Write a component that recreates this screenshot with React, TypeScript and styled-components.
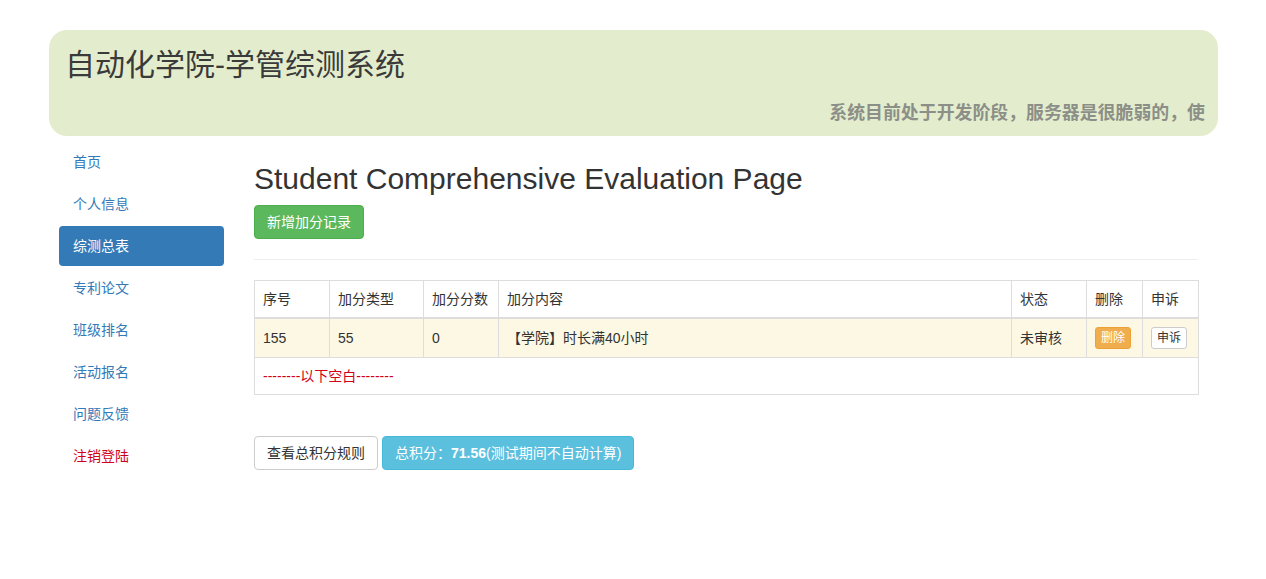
import React from "react";
import styled, { createGlobalStyle } from "styled-components";

const Global = createGlobalStyle`
  html, body { margin: 0; padding: 0; background: #fff; }
  body {
    font-family: "Liberation Sans", Arial, "Noto Sans CJK SC", sans-serif;
    font-size: 14px;
    line-height: 1.42857;
    color: #333;
  }
  * { box-sizing: border-box; }
`;

const Page = styled.div`
  width: 1170px;
  margin: 30px auto 0;
`;

const Jumbotron = styled.header`
  margin-left: 1px;
  height: 106px;
  background: #e3edcd;
  border-radius: 18px;
  padding: 17px 13px 12px 16px;
  display: flex;
  flex-direction: column;
`;

const SiteTitle = styled.h1`
  margin: 0;
  font-size: 30px;
  font-weight: 400;
  line-height: 36px;
  color: #3a3a3a;
`;

const Notice = styled.div`
  margin-top: auto;
  overflow: hidden;
  white-space: nowrap;
  text-align: right;
  font-family: "Noto Sans CJK SC", sans-serif;
  font-size: 17.9px;
  font-weight: 700;
  line-height: 26px;
  color: #8c8f88;
`;

const Body = styled.div`
  display: flex;
  align-items: flex-start;
  margin-top: 4px;
`;

const Sidebar = styled.nav`
  width: 165px;
  margin-left: 11px;
  display: flex;
  flex-direction: column;
`;

const NavItem = styled.a<{ $active?: boolean; $danger?: boolean }>`
  display: block;
  height: 40px;
  margin-top: 2px;
  padding: 10px 14px;
  border-radius: 4px;
  font-size: 14px;
  line-height: 20px;
  text-decoration: none;
  cursor: pointer;
  background: ${(p) => (p.$active ? "#337ab7" : "transparent")};
  color: ${(p) => (p.$active ? "#fff" : p.$danger ? "#d0021b" : "#337ab7")};
`;

const Main = styled.main`
  width: 944px;
  margin-left: 30px;
`;

const PageHeading = styled.h2`
  margin: 22px 0 10px;
  font-size: 30px;
  font-weight: 400;
  line-height: 33px;
  color: #333;
`;

const Btn = styled.button<{ $variant: "success" | "default" | "info" | "warning"; $size?: "xs" }>`
  display: inline-block;
  font-family: inherit;
  font-size: ${(p) => (p.$size === "xs" ? "12px" : "14px")};
  line-height: ${(p) => (p.$size === "xs" ? "1.5" : "20px")};
  padding: ${(p) => (p.$size === "xs" ? "1px 5px" : "6px 12px")};
  border-radius: ${(p) => (p.$size === "xs" ? "3px" : "4px")};
  border: 1px solid
    ${(p) =>
      p.$variant === "success"
        ? "#4cae4c"
        : p.$variant === "info"
        ? "#46b8da"
        : p.$variant === "warning"
        ? "#eea236"
        : "#ccc"};
  background: ${(p) =>
    p.$variant === "success"
      ? "#5cb85c"
      : p.$variant === "info"
      ? "#5bc0de"
      : p.$variant === "warning"
      ? "#f0ad4e"
      : "#fff"};
  color: ${(p) => (p.$variant === "default" ? "#333" : "#fff")};
  cursor: pointer;
  white-space: nowrap;
  vertical-align: middle;
`;

const Rule = styled.hr`
  margin: 20px 0;
  border: 0;
  border-top: 1px solid #eee;
`;

const Table = styled.table`
  width: 944px;
  border-collapse: collapse;
  border-spacing: 0;
  border: 1px solid #ddd;
  table-layout: fixed;
`;

const Th = styled.th`
  padding: 8px;
  text-align: left;
  font-weight: 400;
  line-height: 20px;
  border: 1px solid #ddd;
  border-bottom: 2px solid #ddd;
  vertical-align: bottom;
`;

const Tr = styled.tr<{ $warning?: boolean }>`
  background: ${(p) => (p.$warning ? "#fcf8e3" : "transparent")};
`;

const Td = styled.td`
  padding: 8px;
  line-height: 20px;
  border: 1px solid #ddd;
  vertical-align: middle;
`;

const EmptyCell = styled.td`
  padding: 8px;
  line-height: 20px;
  border-top: 1px solid #ddd;
  color: #d0021b;
`;

const Footer = styled.div`
  margin-top: 41px;
  display: flex;
  gap: 4px;
`;

const columns = [
  { label: "序号", w: 75 },
  { label: "加分类型", w: 94 },
  { label: "加分分数", w: 75 },
  { label: "加分内容", w: 513 },
  { label: "状态", w: 75 },
  { label: "删除", w: 56 },
  { label: "申诉", w: 56 },
];

const nav = ["首页", "个人信息", "综测总表", "专利论文", "班级排名", "活动报名", "问题反馈"];

export default function App() {
  return (
    <>
      <Global />
      <Page>
        <Jumbotron>
          <SiteTitle>自动化学院-学管综测系统</SiteTitle>
          <Notice>系统目前处于开发阶段，服务器是很脆弱的，使</Notice>
        </Jumbotron>
        <Body>
          <Sidebar>
            {nav.map((n) => (
              <NavItem key={n} $active={n === "综测总表"}>
                {n}
              </NavItem>
            ))}
            <NavItem $danger>注销登陆</NavItem>
          </Sidebar>
          <Main>
            <PageHeading>Student Comprehensive Evaluation Page</PageHeading>
            <Btn $variant="success">新增加分记录</Btn>
            <Rule />
            <Table>
              <colgroup>
                {columns.map((c) => (
                  <col key={c.label} style={{ width: c.w }} />
                ))}
              </colgroup>
              <thead>
                <tr>
                  {columns.map((c) => (
                    <Th key={c.label}>{c.label}</Th>
                  ))}
                </tr>
              </thead>
              <tbody>
                <Tr $warning>
                  <Td>155</Td>
                  <Td>55</Td>
                  <Td>0</Td>
                  <Td>【学院】时长满40小时</Td>
                  <Td>未审核</Td>
                  <Td>
                    <Btn $variant="warning" $size="xs">删除</Btn>
                  </Td>
                  <Td>
                    <Btn $variant="default" $size="xs">申诉</Btn>
                  </Td>
                </Tr>
                <tr>
                  <EmptyCell colSpan={7}>--------以下空白--------</EmptyCell>
                </tr>
              </tbody>
            </Table>
            <Footer>
              <Btn $variant="default">查看总积分规则</Btn>
              <Btn $variant="info">
                总积分：<b>71.56</b>(测试期间不自动计算)
              </Btn>
            </Footer>
          </Main>
        </Body>
      </Page>
    </>
  );
}
